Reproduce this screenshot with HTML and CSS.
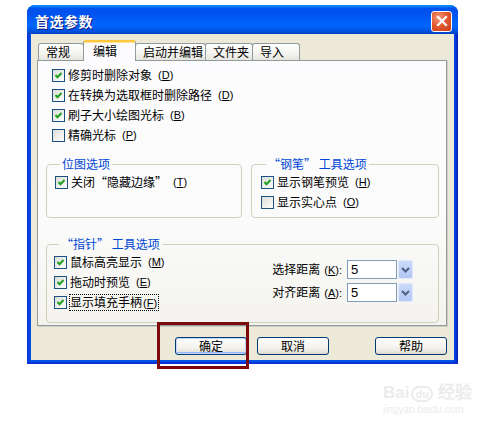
FILE: index.html
```html
<!DOCTYPE html>
<html lang="zh-CN">
<head>
<meta charset="UTF-8" />
<title>首选参数</title>
<link rel="stylesheet" href="styles.css">
</head>
<body>
  <div class="window" role="dialog" aria-label="首选参数">
    <div class="titlebar">
      <span class="title">首选参数</span>
      <button class="close" aria-label="关闭">
        <svg width="12" height="12" viewBox="0 0 12 12"><path d="M2 2 L10 10 M10 2 L2 10" stroke="#fff" stroke-width="2.2" stroke-linecap="square"/></svg>
      </button>
    </div>
    <div class="client">
      <div class="tabs">
        <div class="tab w45">常规</div>
        <div class="tab active w52">编辑</div>
        <div class="tab w70">启动并编辑</div>
        <div class="tab w47">文件夹</div>
        <div class="tab w47">导入</div>
      </div>
      <div class="panel">
        <div class="checklist">
          <label class="cb-row"><span class="cb on"></span>修剪时删除对象<span class="key">(<u>D</u>)</span></label>
          <label class="cb-row"><span class="cb on"></span>在转换为选取框时删除路径<span class="key">(<u>D</u>)</span></label>
          <label class="cb-row"><span class="cb on"></span>刷子大小绘图光标<span class="key">(<u>B</u>)</span></label>
          <label class="cb-row"><span class="cb"></span>精确光标<span class="key">(<u>P</u>)</span></label>
        </div>
        <div class="group-row">
          <fieldset class="group bitmap">
            <legend>位图选项</legend>
            <label class="cb-row"><span class="cb on"></span>关闭“隐藏边缘”<span class="key">(<u>T</u>)</span></label>
          </fieldset>
          <fieldset class="group pen">
            <legend>“钢笔” 工具选项</legend>
            <label class="cb-row"><span class="cb on"></span>显示钢笔预览<span class="key">(<u>H</u>)</span></label>
            <label class="cb-row"><span class="cb"></span>显示实心点<span class="key">(<u>O</u>)</span></label>
          </fieldset>
        </div>
        <fieldset class="group pointer">
          <legend>“指针” 工具选项</legend>
          <div class="pointer-body">
            <div class="pointer-checks">
              <label class="cb-row"><span class="cb on"></span>鼠标高亮显示<span class="key">(<u>M</u>)</span></label>
              <label class="cb-row"><span class="cb on"></span>拖动时预览<span class="key">(<u>E</u>)</span></label>
              <label class="cb-row"><span class="cb on"></span><span class="focus">显示填充手柄<span class="key tight">(<u>F</u>)</span></span></label>
            </div>
            <div class="distances">
              <span class="dist-label">选择距离<span class="key">(<u>K</u>):</span></span>
              <div class="combo"><span class="combo-field">5</span><span class="combo-btn"><svg width="9" height="6" viewBox="0 0 9 6"><path d="M1 1 L4.5 4.5 L8 1" fill="none" stroke="#4d6185" stroke-width="2"/></svg></span></div>
              <span class="dist-label">对齐距离<span class="key">(<u>A</u>):</span></span>
              <div class="combo"><span class="combo-field">5</span><span class="combo-btn"><svg width="9" height="6" viewBox="0 0 9 6"><path d="M1 1 L4.5 4.5 L8 1" fill="none" stroke="#4d6185" stroke-width="2"/></svg></span></div>
            </div>
          </div>
        </fieldset>
      </div>
      <div class="buttons">
        <button class="btn default">确定</button>
        <button class="btn">取消</button>
        <button class="btn help">帮助</button>
      </div>
    </div>
  </div>

  <div class="watermark">
    <div class="wm-logo">Bai<span class="wm-du">du</span> 经验</div>
    <div class="wm-url">jingyan.baidu.com</div>
  </div>

  <div class="highlight" aria-hidden="true"></div>
</body>
</html>
```

FILE: styles.css
```css
html, body {
  margin: 0;
  padding: 0;
  background: #fff;
}
body {
  position: relative;
  width: 496px;
  height: 435px;
  overflow: hidden;
  font-family: "Noto Sans CJK SC", "Liberation Sans", sans-serif;
  font-size: 12px;
  color: #000;
}
.key {
  font-family: "Liberation Sans", sans-serif;
  font-size: 11px;
  margin-left: 4px;
}
.key.tight {
  margin-left: 1px;
}
.window {
  margin: 5px 0 0 27px;
  width: 431px;
  height: 359px;
  box-sizing: border-box;
  background: linear-gradient(90deg, #0831d9, #0054e3 4px, #0054e3 calc(100% - 5px), #0831d9 calc(100% - 2px), #001ea0);
  border-radius: 8px 8px 0 0;
  padding: 0 4px 4px;
  display: flex;
  flex-direction: column;
  box-shadow: inset 0 -2px 0 #0831d9;
}
.titlebar {
  height: 29px;
  margin: 0 -4px;
  padding: 3px 6px 0 8px;
  box-sizing: border-box;
  display: flex;
  align-items: center;
  justify-content: space-between;
  border-radius: 8px 8px 0 0;
  background: linear-gradient(#0997ff, #0053ee 12%, #0050ee 25%, #06f 70%, #0055e5 88%, #0041c0);
}
.title {
  color: #fff;
  font-weight: 700;
  font-size: 14px;
  letter-spacing: 0.5px;
  text-shadow: 1px 1px 0 #0a1883;
}
.close {
  width: 21px;
  height: 21px;
  padding: 0;
  border: 1px solid #fff;
  border-radius: 3px;
  background: radial-gradient(circle at 35% 30%, #f39b7e, #e35a32 45%, #c73d16);
  display: flex;
  align-items: center;
  justify-content: center;
}
.client {
  flex: 1;
  background: #ece9d8;
  padding: 9px 7px 0 6px;
  display: flex;
  flex-direction: column;
}
.tabs {
  display: flex;
  align-items: flex-end;
  height: 17px;
  padding-left: 1px;
  position: relative;
  z-index: 1;
}
.tab {
  height: 17px;
  box-sizing: border-box;
  padding-left: 7px;
  border: 1px solid #919b9c;
  border-bottom: none;
  border-radius: 3px 3px 0 0;
  background: linear-gradient(#fff, #f3f3ef 60%, #e6e5dd);
  line-height: 15px;
  margin-right: -1px;
  white-space: nowrap;
}
.tab.active {
  height: 21px;
  margin-bottom: -1px;
  padding-left: 9px;
  border-top: 2px solid #ffc83c;
  box-shadow: inset 0 1px 0 #ffe39a;
  background: #fcfcfe;
  line-height: 17px;
}
.w45 { width: 46px; }
.w52 { width: 53px; }
.w70 { width: 71px; }
.w47 { width: 48px; }
.panel {
  height: 266px;
  box-sizing: border-box;
  border: 1px solid #919b9c;
  background: linear-gradient(#fcfcfe, #fbfbfb 60%, #f4f3ee);
  padding: 4px 7px 0 8px;
  display: flex;
  flex-direction: column;
  box-shadow: 1px 1px 0 #d0cec3;
}
.checklist {
  padding-left: 6px;
  display: flex;
  flex-direction: column;
}
.cb-row {
  height: 20px;
  display: flex;
  align-items: center;
  gap: 2px;
  line-height: 14px;
  white-space: nowrap;
}
.cb-row u, .dist-label u {
  text-decoration: underline;
  text-underline-offset: 1px;
}
.cb {
  width: 13px;
  height: 13px;
  box-sizing: border-box;
  border: 1px solid #1c5180;
  background: linear-gradient(135deg, #dcdcd7, #fff);
  flex: none;
  margin-right: 1px;
}
.cb.on {
  background: url("data:image/svg+xml,%3Csvg xmlns='http://www.w3.org/2000/svg' width='11' height='11'%3E%3Cpath d='M2.5 5 L4.5 7.2 L8.5 3' fill='none' stroke='%2321a121' stroke-width='2'/%3E%3C/svg%3E") center no-repeat, linear-gradient(135deg, #dcdcd7, #fff);
}
.group {
  margin: 0;
  padding: 1px 0 0 8px;
  min-width: 0;
  border: 1px solid #d0d0bf;
  border-radius: 4px;
  box-sizing: border-box;
}
.group legend {
  color: #0046d5;
  padding: 0 2px;
  margin-left: 5px;
  line-height: 14px;
  white-space: nowrap;
}
.group-row {
  margin-top: 12px;
  display: flex;
  gap: 9px;
}
.bitmap {
  width: 196px;
  height: 61px;
}
.pen {
  flex: 1;
  height: 61px;
  padding-left: 9px;
}
.pointer {
  margin-top: 19px;
  height: 86px;
  padding-left: 7px;
}
.pointer-body {
  display: flex;
}
.focus {
  outline: 1px dotted #000;
  outline-offset: 0;
  padding-right: 1px;
}
.distances {
  margin-left: auto;
  padding: 8px 25px 0 0;
  display: grid;
  grid-template-columns: auto auto;
  column-gap: 5px;
  row-gap: 4px;
  align-items: center;
  align-self: flex-start;
}
.dist-label {
  line-height: 14px;
}
.combo {
  display: flex;
  gap: 1px;
}
.combo-field {
  width: 50px;
  height: 19px;
  box-sizing: border-box;
  border: 1px solid #7f9db9;
  background: #fff;
  padding-left: 3px;
  line-height: 17px;
  font-family: "Liberation Sans", sans-serif;
  font-size: 13px;
}
.combo-btn {
  width: 15px;
  height: 19px;
  box-sizing: border-box;
  border: 1px solid #e0e8fc;
  border-radius: 2px;
  background: linear-gradient(#cbdaf9, #b3c8f5);
  display: flex;
  align-items: center;
  justify-content: center;
}
.buttons {
  margin-top: 11px;
  display: flex;
  gap: 10px;
}
.btn {
  width: 72px;
  height: 18px;
  padding: 0;
  border: 1px solid #003c74;
  border-radius: 3px;
  background: linear-gradient(#fff, #f3f2ed 60%, #e5e3da 90%, #d6d0c5);
  font-family: inherit;
  font-size: 12px;
  line-height: 14px;
  color: #000;
}
.btn.default {
  margin-left: 138px;
  box-shadow: inset 0 0 0 1px #c5d5fc, inset 0 -1px 0 1px #99b6f5;
}
.btn.help {
  margin-left: auto;
}
.watermark {
  margin: 19px 0 0 383px;
  color: #ececec;
  font-family: "Liberation Sans", sans-serif;
}
.wm-logo {
  font-size: 17px;
  font-weight: 700;
  line-height: 20px;
}
.wm-du {
  display: inline-block;
  margin-left: 2px;
  font-size: 11px;
  border: 2px solid #ececec;
  border-radius: 9px;
  padding: 0 2px;
  line-height: 12px;
}
.wm-url {
  font-size: 10px;
  line-height: 14px;
}
.highlight {
  position: absolute;
  left: 157px;
  top: 322px;
  width: 92px;
  height: 47px;
  box-sizing: border-box;
  border: 3px solid #7d0a0a;
}
```
